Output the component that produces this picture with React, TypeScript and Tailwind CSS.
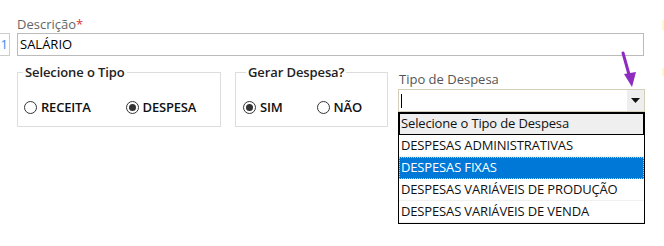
import React from "react";

const font = { fontFamily: '"Open Sans", "Noto Sans", sans-serif' };

function Radio({ checked, label }: { checked?: boolean; label: string }) {
  return (
    <div className="flex items-center gap-[4px]">
      <span className="flex h-[13px] w-[13px] items-center justify-center rounded-full border border-[#333] bg-white">
        {checked && <span className="h-[7px] w-[7px] rounded-full bg-[#333]" />}
      </span>
      <span className="text-[13px] font-semibold tracking-[-0.2px] text-[#111]">{label}</span>
    </div>
  );
}

export default function App() {
  const items = [
    "DESPESAS ADMINISTRATIVAS",
    "DESPESAS FIXAS",
    "DESPESAS VARIÁVEIS DE PRODUÇÃO",
    "DESPESAS VARIÁVEIS DE VENDA",
  ];
  return (
    <div className="relative h-[246px] w-[664px] overflow-hidden bg-white" style={font}>
      <div className="flex flex-col pt-[16px]">
        <div className="pl-[17px] text-[13px] leading-[17px] text-[#666]">
          Descrição<span className="text-[#e0312f]">*</span>
        </div>
        <div className="flex items-center gap-[7px]">
          <div className="flex h-[23px] w-[10px] items-center justify-end border-y border-r border-[#ccc] pr-[1px] text-[13px] text-[#2b8ef0]">
            1
          </div>
          <div className="flex h-[23px] w-[627px] items-center border border-[#bbb] px-[2px] text-[13px] text-black">
            SALÁRIO
          </div>
        </div>
        <div className="mt-[8px] flex items-start">
          <fieldset className="ml-[17px] h-[63px] w-[204px] border border-[#ddd] pl-[5px]">
            <legend className="px-[2px] text-[13px] font-semibold leading-[17px] tracking-[-0.1px] text-[#222]">
              Selecione o Tipo
            </legend>
            <div className="mt-[17px] flex gap-[35px] pl-[1px]">
              <Radio label="RECEITA" />
              <Radio checked label="DESPESA" />
            </div>
          </fieldset>
          <fieldset className="ml-[14px] h-[63px] w-[153px] border border-[#ddd] pl-[10px]">
            <legend className="px-[2px] text-[13px] font-semibold leading-[17px] tracking-[-0.1px] text-[#222]">
              Gerar Despesa?
            </legend>
            <div className="mt-[17px] -ml-[3px] flex gap-[34px]">
              <Radio checked label="SIM" />
              <Radio label="NÃO" />
            </div>
          </fieldset>
          <div className="ml-[10px] mt-[7px] flex w-[247px] flex-col">
            <div className="pl-[1px] text-[13px] leading-[17px] text-[#555]">Tipo de Despesa</div>
            <div className="relative mt-[1px]">
              <div className="flex h-[23px] items-stretch border border-[#d4cfb8] bg-white">
                <div className="flex flex-1 items-center pl-[2px]">
                  <span className="h-[14px] w-[1px] bg-black" />
                </div>
                <div className="flex w-[17px] items-center justify-center bg-[#eeeeee]">
                  <svg width="9" height="5" viewBox="0 0 9 5">
                    <path d="M0 0 H9 L4.5 5 Z" fill="#111" />
                  </svg>
                </div>
              </div>
              <div className="absolute left-0 top-full w-[247px] border border-black bg-white text-[13px] tracking-[-0.15px]">
                <div className="flex h-[22px] items-center bg-[#efefef] pl-[2px] text-[#111] shadow-[inset_0_0_0_1px_black]">
                  Selecione o Tipo de Despesa
                </div>
                {items.map((it, i) => (
                  <div
                    key={it}
                    className={
                      i === 1
                        ? "flex h-[22px] items-center bg-[#0078d7] pl-[2px] text-white outline-1 outline-dotted -outline-offset-1 outline-[#f5c07a]"
                        : "flex h-[22px] items-center border-b border-[#f0f0f0] pl-[2px] text-[#111]"
                    }
                  >
                    {it}
                  </div>
                ))}
              </div>
            </div>
          </div>
        </div>
      </div>
      <svg className="absolute left-[618px] top-[50px]" width="20" height="40" viewBox="0 0 20 40">
        <path d="M5 3 L12 28" stroke="#8e2cbf" strokeWidth="3" strokeLinecap="round" />
        <path d="M6 24 L18 22 L14 37 Z" fill="#8e2cbf" />
      </svg>
      <span className="absolute left-[662px] top-[20px] h-[10px] w-[2px] bg-[#fdf8d0]" />
      <span className="absolute left-[662px] top-[68px] h-[8px] w-[2px] bg-[#fdf8d0]" />
    </div>
  );
}
